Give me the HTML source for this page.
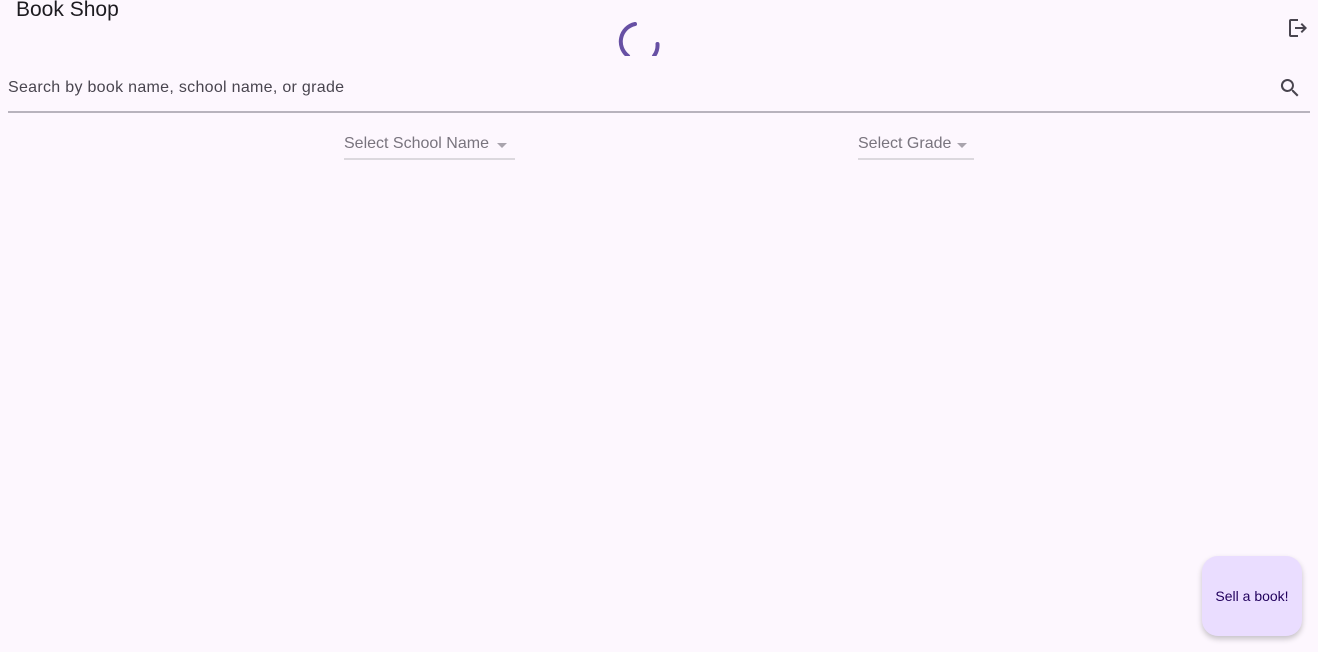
<!DOCTYPE html>
<html><head><style>
body{margin:0;width:1318px;height:652px;background:#fdf7fe;font-family:"Liberation Sans",sans-serif;position:relative;overflow:hidden;color:#1d1b20}
.a{position:absolute}
</style></head><body>
<div class="a" style="left:16px;top:-2px;font-size:21px;color:#1d1b20">Book Shop</div>
<svg class="a" style="left:600px;top:0" width="80" height="56" viewBox="0 0 80 56">
<path d="M35 24 A18 18 0 0 0 28 56" fill="none" stroke="#6750a4" stroke-width="4" stroke-linecap="round"/>
<path d="M57.5 44 A18 18 0 0 1 54 56" fill="none" stroke="#6750a4" stroke-width="4" stroke-linecap="round"/>
</svg>
<svg class="a" style="left:1286px;top:16px" width="24" height="24" viewBox="0 0 24 24"><path d="M5 3h7v2H5v14h7v2H5a2 2 0 0 1-2-2V5a2 2 0 0 1 2-2zm11 4l5 5-5 5-1.4-1.4 2.6-2.6H9v-2h8.2l-2.6-2.6z" fill="#49454f"/></svg>
<div class="a" style="left:8px;top:79px;font-size:16px;color:#49454f;letter-spacing:0.3px">Search by book name, school name, or grade</div>
<svg class="a" style="left:1278px;top:76px" width="24" height="24" viewBox="0 0 24 24"><path d="M15.5 14h-.8l-.3-.3A6.5 6.5 0 1 0 9.5 16a6.5 6.5 0 0 0 4.2-1.6l.3.3v.8l5 5 1.5-1.5-5-5zm-6 0A4.5 4.5 0 1 1 14 9.5 4.5 4.5 0 0 1 9.5 14z" fill="#49454f"/></svg>
<div class="a" style="left:8px;top:111px;width:1302px;height:2px;background:#b8b3bd"></div>
<div class="a" style="left:344px;top:135px;font-size:16px;color:#79747e">Select School Name</div>
<div class="a" style="left:497px;top:143px;width:0;height:0;border-left:5px solid transparent;border-right:5px solid transparent;border-top:5px solid #a9a4ad"></div>
<div class="a" style="left:344px;top:158px;width:171px;height:2px;background:#dcd8de"></div>
<div class="a" style="left:858px;top:135px;font-size:16px;color:#79747e">Select Grade</div>
<div class="a" style="left:957px;top:143px;width:0;height:0;border-left:5px solid transparent;border-right:5px solid transparent;border-top:5px solid #a9a4ad"></div>
<div class="a" style="left:858px;top:158px;width:116px;height:2px;background:#dcd8de"></div>
<div class="a" style="left:1202px;top:556px;width:100px;height:80px;border-radius:16px;background:#eaddff;box-shadow:0 3px 6px rgba(0,0,0,0.22);display:flex;align-items:center;justify-content:center;font-size:14px;color:#21005d">Sell a book!</div>
</body></html>
